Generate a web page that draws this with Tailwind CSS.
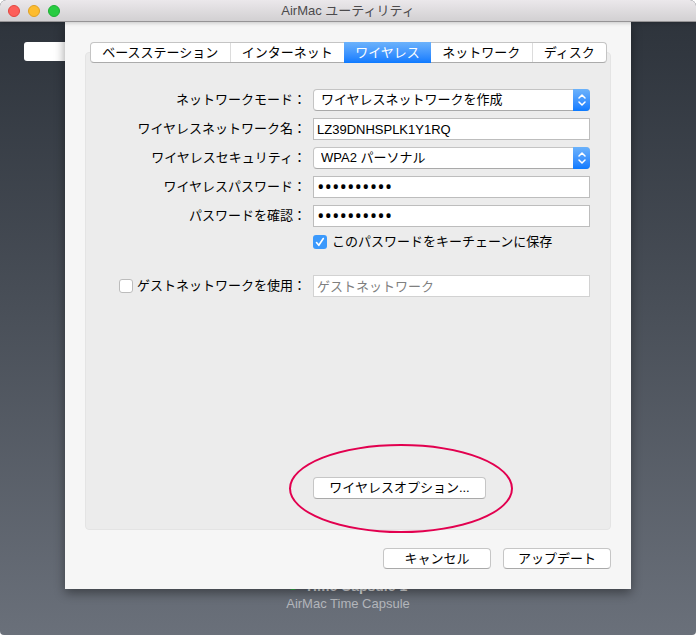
<!DOCTYPE html>
<html lang="ja">
<head>
    <meta charset="UTF-8">
    <meta name="viewport" content="width=device-width, initial-scale=1.0">
    <title>AirMac ユーティリティ</title>
    <script src="https://cdn.jsdelivr.net/npm/@tailwindcss/browser@4"></script>
</head>
<body class="bg-white font-['Liberation_Sans','Noto_Sans_CJK_JP',sans-serif] text-[13px] leading-4 text-black">
    <div class="relative flex min-h-screen flex-col overflow-hidden rounded-t-md rounded-b-sm bg-linear-to-b from-[#2c323a] to-[#6a707a]">

        <!-- Title bar -->
        <header class="relative z-20 flex h-[22px] items-center justify-center border-b border-[#969496] bg-linear-to-b from-[#ebe8eb] to-[#d2d0d2] shadow-[0_1px_4px_rgba(0,0,0,0.2)]">
            <div class="absolute left-2 flex gap-2">
                <button type="button" aria-label="閉じる" class="size-3 rounded-full border border-[#e2463f] bg-[#fd5f5a]"></button>
                <button type="button" aria-label="しまう" class="size-3 rounded-full border border-[#dfa023] bg-[#fdbc2f]"></button>
                <button type="button" aria-label="拡大" class="size-3 rounded-full border border-[#1dae34] bg-[#28cc41]"></button>
            </div>
            <h1 class="text-[#4c4a4c]">AirMac ユーティリティ</h1>
        </header>

        <div class="absolute left-6 top-[42px] h-[19px] w-20 rounded-[3px] bg-white"></div>

        <!-- Settings sheet -->
        <main class="relative z-10 mx-[65px] flex flex-1 flex-col bg-[#f6f6f6] px-5 py-5 shadow-[0_4px_10px_rgba(0,0,0,0.4)]">
            <div role="tablist" class="relative z-10 ml-[5px] mr-1 flex h-[21px] rounded-sm border border-[#c4c4c4] border-b-[#ababab] bg-white">
                <button type="button" role="tab" class="flex flex-auto items-center justify-center border-r border-[#dcdcdc] px-2">ベースステーション</button>
                <button type="button" role="tab" class="flex flex-auto items-center justify-center px-2">インターネット</button>
                <button type="button" role="tab" aria-selected="true" class="-my-px flex flex-auto items-center justify-center bg-linear-to-b from-[#6bb2fb] to-[#0a7aff] px-2 text-white">ワイヤレス</button>
                <button type="button" role="tab" class="flex flex-auto items-center justify-center border-r border-[#dcdcdc] px-2">ネットワーク</button>
                <button type="button" role="tab" class="flex flex-auto items-center justify-center px-2">ディスク</button>
            </div>

            <form id="wireless" class="-mt-[11px] flex flex-1 flex-col rounded-sm border border-[#e4e4e4] bg-[#ececec] pb-[30px] pr-5 pt-9">
                <div class="grid grid-cols-[220px_1fr] items-center gap-x-[7px] gap-y-[7px]">
                    <label for="mode" class="text-right">ネットワークモード：</label>
                    <div class="relative">
                        <select id="mode" class="block h-[22px] w-full appearance-none rounded-sm border border-[#c4c4c4] border-b-[#a9a9a9] bg-white pl-[7px] pr-6">
                            <option>ワイヤレスネットワークを作成</option>
                        </select>
                        <span class="pointer-events-none absolute inset-y-0 right-0 flex w-[17px] items-center justify-center rounded-r-sm bg-linear-to-b from-[#6bb2fb] to-[#0a7aff]">
                            <svg class="h-3 w-2" viewBox="0 0 8 12" fill="none" stroke="#fff" stroke-width="1.5" stroke-linecap="round" stroke-linejoin="round"><path d="M1 4l3-3 3 3M1 8l3 3 3-3"/></svg>
                        </span>
                    </div>

                    <label for="ssid" class="text-right">ワイヤレスネットワーク名：</label>
                    <input id="ssid" type="text" value="LZ39DNHSPLK1Y1RQ" class="h-[22px] w-full border border-[#bdbdbd] bg-white px-[3px]">

                    <label for="security" class="text-right">ワイヤレスセキュリティ：</label>
                    <div class="relative">
                        <select id="security" class="block h-[22px] w-full appearance-none rounded-sm border border-[#c4c4c4] border-b-[#a9a9a9] bg-white pl-[7px] pr-6">
                            <option>WPA2 パーソナル</option>
                        </select>
                        <span class="pointer-events-none absolute inset-y-0 right-0 flex w-[17px] items-center justify-center rounded-r-sm bg-linear-to-b from-[#6bb2fb] to-[#0a7aff]">
                            <svg class="h-3 w-2" viewBox="0 0 8 12" fill="none" stroke="#fff" stroke-width="1.5" stroke-linecap="round" stroke-linejoin="round"><path d="M1 4l3-3 3 3M1 8l3 3 3-3"/></svg>
                        </span>
                    </div>

                    <label for="password" class="text-right">ワイヤレスパスワード：</label>
                    <input id="password" type="password" value="abcdefghij" class="h-[22px] w-full border border-[#bdbdbd] bg-white px-[3px] font-['Open_Sans',sans-serif] text-xl">

                    <label for="confirm" class="text-right">パスワードを確認：</label>
                    <input id="confirm" type="password" value="abcdefghij" class="h-[22px] w-full border border-[#bdbdbd] bg-white px-[3px] font-['Open_Sans',sans-serif] text-xl">

                    <div class="col-start-2 flex items-center gap-[5px]">
                        <span class="relative size-3.5">
                            <input id="keychain" type="checkbox" checked class="block size-3.5 appearance-none rounded-[3px] bg-[#3b99fc]">
                            <svg class="pointer-events-none absolute inset-0 size-3.5" viewBox="0 0 14 14" fill="none" stroke="#fff" stroke-width="1.6" stroke-linecap="round" stroke-linejoin="round"><path d="M3.5 7.5l2.3 2.8L10.3 3.5"/></svg>
                        </span>
                        <label for="keychain">このパスワードをキーチェーンに保存</label>
                    </div>
                </div>

                <div class="mt-[25px] grid grid-cols-[220px_1fr] items-center gap-x-[7px]">
                    <div class="flex items-center justify-end gap-1">
                        <input id="guest" type="checkbox" class="size-3.5 appearance-none rounded-[3px] border border-[#bcbcbc] bg-white">
                        <label for="guest">ゲストネットワークを使用：</label>
                    </div>
                    <input type="text" aria-label="ゲストネットワーク名" placeholder="ゲストネットワーク" disabled class="h-[22px] w-full border border-[#d2d2d2] bg-white px-[3px] placeholder:text-[#7f7f7f]">
                </div>

                <div class="relative ml-[227px] mt-auto self-start">
                    <button type="button" class="block h-[22px] w-[173px] rounded-sm border border-[#c6c6c6] border-b-[#a9a9a9] bg-white">ワイヤレスオプション...</button>
                    <!-- Highlight ring -->
                    <div class="pointer-events-none absolute -bottom-[34px] -left-6 -right-[27px] -top-[33px] rounded-[50%] border-2 border-[#e2004f]"></div>
                </div>
            </form>

            <div class="mt-[18px] flex justify-end gap-3">
                <button type="button" class="h-[21px] w-[108px] rounded-sm border border-[#c6c6c6] border-b-[#a9a9a9] bg-white">キャンセル</button>
                <button type="submit" form="wireless" class="h-[21px] w-[108px] rounded-sm border border-[#c6c6c6] border-b-[#a9a9a9] bg-white">アップデート</button>
            </div>
        </main>

        <!-- Device name, partly under the sheet -->
        <footer class="-mt-[11px] flex flex-col items-center gap-0.5 pb-[23px]">
            <div class="flex items-center gap-2 text-sm leading-4 font-bold text-[#e4e5e7]">
                <span class="size-2 rounded-full bg-[#35c24a]"></span>
                Time Capsule 1
            </div>
            <div class="text-[#b4b7bc]">AirMac Time Capsule</div>
        </footer>
    </div>
</body>
</html>
